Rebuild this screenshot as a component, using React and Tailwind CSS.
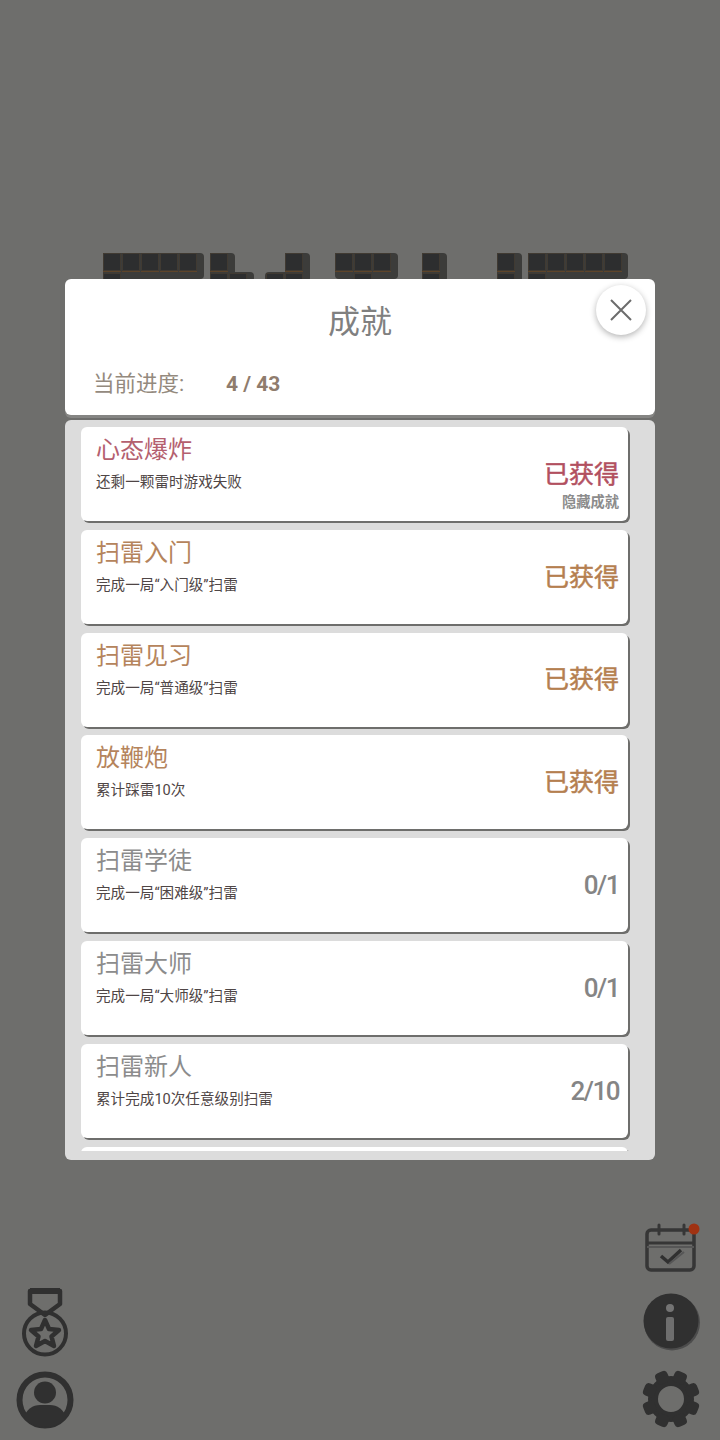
const cjk = "font-['Roboto','Noto_Sans_CJK_SC',sans-serif]";

const achievements = [
  { title: "心态爆炸", desc: "还剩一颗雷时游戏失败", status: "已获得", hidden: true, tone: "red" },
  { title: "扫雷入门", desc: "完成一局“入门级”扫雷", status: "已获得", tone: "brown" },
  { title: "扫雷见习", desc: "完成一局“普通级”扫雷", status: "已获得", tone: "brown" },
  { title: "放鞭炮", desc: "累计踩雷10次", status: "已获得", tone: "brown" },
  { title: "扫雷学徒", desc: "完成一局“困难级”扫雷", status: "0/1", tone: "grey" },
  { title: "扫雷大师", desc: "完成一局“大师级”扫雷", status: "0/1", tone: "grey" },
  { title: "扫雷新人", desc: "累计完成10次任意级别扫雷", status: "2/10", tone: "grey" },
  { title: "", desc: "", status: "", tone: "grey" },
];

const titleColors = {
  red: "text-[#b4606f]",
  brown: "text-[#b5845c]",
  grey: "text-[#8c8c8c]",
};

const statusColors = {
  red: "text-[#b2505f] text-[25px] pt-[3px] [-webkit-text-stroke:0.5px_#b2505f]",
  brown: "text-[#b57f50] text-[25px] pt-[3px] [-webkit-text-stroke:0.5px_#b57f50]",
  grey: "text-[#858585] text-[26px] font-medium tracking-[-1.5px] pt-[3px]",
};

// blocks of the game logo behind the dialog: [x, y, w, h]
const logoShapes = [
  [103, 0, 101, 26], [103, 19, 18, 10],
  [210, 0, 25, 26], [210, 19, 44, 10],
  [285, 0, 25, 26], [265, 19, 45, 10],
  [335, 0, 63, 26], [352, 19, 18, 10],
  [422, 0, 25, 29],
  [497, 0, 25, 29],
  [528, 0, 100, 26], [528, 19, 18, 10],
];

const logoTiles = [
  [103, 0], [122, 0], [141, 0], [160, 0], [179, 0], [103, 20],
  [210, 0], [210, 20], [229, 20],
  [285, 0], [266, 20], [285, 20],
  [335, 0], [354, 0], [373, 0], [354, 20],
  [422, 0], [422, 20],
  [497, 0], [497, 20],
  [528, 0], [547, 0], [566, 0], [585, 0], [604, 0], [528, 20],
];

function Logo() {
  return (
    <svg width="720" height="29" viewBox="0 0 720 29">
      {logoShapes.map(([x, y, w, h], i) => (
        <rect key={i} x={x} y={y} width={w} height={h} rx="4" fill="#3c3c3a" />
      ))}
      {logoTiles.map(([x, y], i) => (
        <g key={i}>
          <rect x={x} y={y} width="18" height="19" fill="#403a32" />
          <rect x={x + 1} y={y + 1} width="16" height="16" fill="#2d2e2f" />
          <rect x={x} y={y + 18} width="18" height="1" fill="#5e4429" />
        </g>
      ))}
    </svg>
  );
}

function MedalIcon() {
  return (
    <svg width="46" height="70" viewBox="0 0 46 70" fill="none" stroke="#303030">
      <path d="M8 16 V3 H38 V16 L23 27 Z" strokeWidth="4.5" strokeLinejoin="round" />
      <path d="M8 3 H38" strokeWidth="6" />
      <circle cx="23" cy="45.5" r="21" strokeWidth="4" />
      <path
        d="M23 32 L27 41 L37 42 L29.5 48.5 L32 58 L23 53 L14 58 L16.5 48.5 L9 42 L19 41 Z"
        strokeWidth="4.5"
        strokeLinejoin="round"
      />
    </svg>
  );
}

function UserIcon() {
  return (
    <svg width="58" height="58" viewBox="0 0 58 58">
      <circle cx="29" cy="29" r="25.5" fill="none" stroke="#303030" strokeWidth="6" />
      <circle cx="29" cy="21.5" r="11" fill="#303030" />
      <path d="M8 47 C10 38 17 34 24 34 H34 C41 34 48 38 50 47 C45 53 37 56 29 56 C21 56 13 53 8 47 Z" fill="#303030" />
    </svg>
  );
}

function CalendarIcon() {
  return (
    <svg width="58" height="52" viewBox="0 0 58 52" fill="none">
      <rect x="5" y="7" width="47" height="40" rx="4" stroke="#363636" strokeWidth="3.5" />
      <path d="M5 20 H52" stroke="#363636" strokeWidth="3" />
      <path d="M5 24 H52" stroke="#565656" strokeWidth="2" />
      <path d="M17 2 V11 M42 2 V11" stroke="#363636" strokeWidth="3" strokeLinecap="round" />
      <path d="M19 33 L26 39 L39 27" stroke="#303030" strokeWidth="3.5" />
      <path d="M27 41 L42 29" stroke="#565656" strokeWidth="2" />
      <circle cx="52" cy="6" r="5.5" fill="#a03212" />
    </svg>
  );
}

function InfoIcon() {
  return (
    <svg width="60" height="58" viewBox="0 0 60 58">
      <circle cx="31" cy="29.5" r="28" fill="#4c4c4c" />
      <circle cx="30" cy="28" r="27.5" fill="#303030" />
      <circle cx="29" cy="15" r="4" fill="#747474" />
      <rect x="25" y="24" width="8" height="24" rx="2" fill="#6e6e6e" />
    </svg>
  );
}

function GearIcon() {
  return (
    <svg width="60" height="60" viewBox="-30 -30 60 60">
      <circle r="18" fill="none" stroke="#303030" strokeWidth="10" />
      {[0, 45, 90, 135, 180, 225, 270, 315].map((deg) => (
        <rect key={deg} x="-6.5" y="-29" width="13" height="12" rx="4" fill="#303030" transform={`rotate(${deg + 22.5})`} />
      ))}
    </svg>
  );
}

function AchievementCard({ item }) {
  return (
    <div className="relative h-[94px] shrink-0 rounded-md bg-white pt-[7px] pl-[15px] shadow-[2px_2px_0_#6e6e6c]">
      <div className={`text-2xl leading-[33px] ${titleColors[item.tone]}`}>{item.title}</div>
      <div className="mt-[5px] text-[14.6px] leading-[20px] text-[#4f4646]">{item.desc}</div>
      <div className="absolute top-0 right-[9px] bottom-[2px] flex flex-col items-end justify-center">
        <div className={statusColors[item.tone]}>{item.status}</div>
      </div>
      {item.hidden && (
        <div className="absolute right-[9px] bottom-[9px] text-[14.25px] leading-[20px] font-bold text-[#8c8c8c]">隐藏成就</div>
      )}
    </div>
  );
}

export default function App() {
  return (
    <div className={`relative flex h-[1440px] w-[720px] flex-col justify-between overflow-hidden bg-[#6e6e6c] pt-[253px] ${cjk}`}>
      <Logo />

      <div className="flex items-end justify-between pr-[19px] pl-[16px] pb-[11px]">
        <div className="flex flex-col items-center gap-[13px]">
          <MedalIcon />
          <UserIcon />
        </div>
        <div className="flex flex-col items-center gap-[18px]">
          <CalendarIcon />
          <InfoIcon />
          <GearIcon />
        </div>
      </div>

      {/* dialog */}
      <div className="absolute top-[279px] left-[65px] flex h-[881px] w-[590px] flex-col gap-[2px]">
        <div className="relative h-[136px] shrink-0 rounded-md bg-white shadow-[0_3px_0_#858583]">
          <div className="pt-[20px] text-center text-[32px] leading-[46px] text-[#808080]">成就</div>
          <div className="mt-[24px] flex items-center pl-[28px]">
            <span className="w-[133px] text-[21.5px] leading-[30px] text-[#948a7e]">当前进度:</span>
            <span className="text-[21px] leading-[30px] font-bold text-[#8f7c6d]">4 / 43</span>
          </div>
          <button className="absolute top-[6px] right-[9px] flex h-[50px] w-[50px] items-center justify-center rounded-full bg-white shadow-[0_2px_6px_rgba(0,0,0,0.3)]">
            <svg width="24" height="24" viewBox="0 0 24 24" fill="none" stroke="#6c6c6c" strokeWidth="2">
              <path d="M2 2 L22 22 M22 2 L2 22" />
            </svg>
          </button>
        </div>

        <div className="mt-[3px] min-h-0 flex-1 rounded-md bg-[#dcdcdc] pt-[7px] pr-[25px] pb-[9px] pl-[16px]">
          <div className="flex h-full flex-col gap-[8.8px] overflow-hidden pr-[2px]">
            {achievements.map((item, i) => (
              <AchievementCard key={i} item={item} />
            ))}
          </div>
        </div>
      </div>
    </div>
  );
}
